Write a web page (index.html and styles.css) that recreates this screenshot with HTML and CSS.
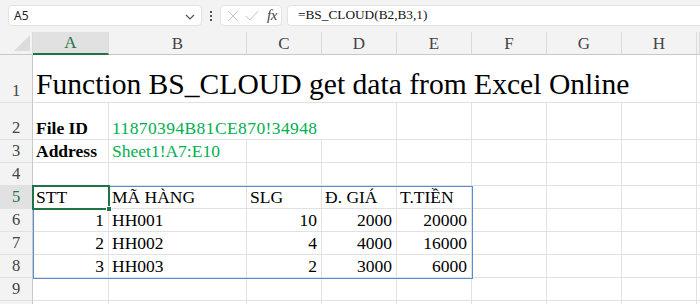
FILE: index.html
```html
<!DOCTYPE html>
<html lang="en">
  <head>
    <meta charset="utf-8" />
    <title>BS_CLOUD</title>
    <link rel="stylesheet" href="styles.css">
  </head>
  <body>
    <div class="toolbar">
      <div class="namebox">
        <span>A5</span>
        <svg class="chev" width="10" height="6" viewBox="0 0 10 6"><path d="M1 1l4 4 4-4" fill="none" stroke="#555" stroke-width="1.2"/></svg>
      </div>
      <div class="dots"><i></i><i></i><i></i></div>
      <div class="fxbox">
        <svg width="12" height="12" viewBox="0 0 12 12"><path d="M1 1l10 10M11 1L1 11" stroke="#c4c4c4" stroke-width="1"/></svg>
        <svg width="14" height="11" viewBox="0 0 14 11"><path d="M1 6l4 4 8-9" fill="none" stroke="#c4c4c4" stroke-width="1"/></svg>
        <span class="fx">fx</span>
      </div>
      <div class="formula">=BS_CLOUD(B2,B3,1)</div>
    </div>

    <div class="sheet">
      <div class="row head">
        <div class="corner"><span class="tri"></span></div>
        <div class="ch sel">A</div>
        <div class="ch">B</div>
        <div class="ch">C</div>
        <div class="ch">D</div>
        <div class="ch">E</div>
        <div class="ch">F</div>
        <div class="ch">G</div>
        <div class="ch">H</div>
        <div class="ch"></div>
      </div>

      <div class="row r1">
        <div class="rh">1</div>
        <div class="c title">Function BS_CLOUD get data from Excel Online</div>
        <div class="c"></div>
      </div>

      <div class="row r2">
        <div class="rh">2</div>
        <div class="c bold">File ID</div>
        <div class="c green span3">11870394B81CE870!34948</div>
        <div class="c"></div><div class="c"></div><div class="c"></div><div class="c"></div><div class="c"></div>
      </div>

      <div class="row">
        <div class="rh">3</div>
        <div class="c bold">Address</div>
        <div class="c green">Sheet1!A7:E10</div>
        <div class="c"></div><div class="c"></div><div class="c"></div><div class="c"></div><div class="c"></div><div class="c"></div><div class="c"></div>
      </div>

      <div class="row">
        <div class="rh">4</div>
        <div class="c"></div><div class="c"></div><div class="c"></div><div class="c"></div><div class="c"></div><div class="c"></div><div class="c"></div><div class="c"></div><div class="c"></div>
      </div>

      <div class="row">
        <div class="rh sel">5</div>
        <div class="c">STT</div>
        <div class="c">MÃ HÀNG</div>
        <div class="c">SLG</div>
        <div class="c">Đ. GIÁ</div>
        <div class="c">T.TIỀN</div>
        <div class="c"></div><div class="c"></div><div class="c"></div><div class="c"></div>
      </div>

      <div class="row">
        <div class="rh">6</div>
        <div class="c num">1</div>
        <div class="c">HH001</div>
        <div class="c num">10</div>
        <div class="c num">2000</div>
        <div class="c num">20000</div>
        <div class="c"></div><div class="c"></div><div class="c"></div><div class="c"></div>
      </div>

      <div class="row">
        <div class="rh">7</div>
        <div class="c num">2</div>
        <div class="c">HH002</div>
        <div class="c num">4</div>
        <div class="c num">4000</div>
        <div class="c num">16000</div>
        <div class="c"></div><div class="c"></div><div class="c"></div><div class="c"></div>
      </div>

      <div class="row">
        <div class="rh">8</div>
        <div class="c num">3</div>
        <div class="c">HH003</div>
        <div class="c num">2</div>
        <div class="c num">3000</div>
        <div class="c num">6000</div>
        <div class="c"></div><div class="c"></div><div class="c"></div><div class="c"></div>
      </div>

      <div class="row">
        <div class="rh">9</div>
        <div class="c"></div><div class="c"></div><div class="c"></div><div class="c"></div><div class="c"></div><div class="c"></div><div class="c"></div><div class="c"></div><div class="c"></div>
      </div>

      <div class="row">
        <div class="rh"></div>
        <div class="c"></div><div class="c"></div><div class="c"></div><div class="c"></div><div class="c"></div><div class="c"></div><div class="c"></div><div class="c"></div><div class="c"></div>
      </div>

      <!-- table range and active cell -->
      <div class="range"></div>
      <div class="cursor"><span class="handle"></span></div>
    </div>
  </body>
</html>
```

FILE: styles.css
```css
* {
  box-sizing: border-box;
}

body {
  margin: 0;
  width: 700px;
  height: 304px;
  overflow: hidden;
  background: #fff;
  font-family: "Liberation Serif", "Times New Roman", serif;
  color: #000;
}

/* formula bar */
.toolbar {
  height: 32px;
  background: #f3f3f3;
  display: flex;
  align-items: flex-start;
  padding: 5px 0 0 8px;
}

.namebox {
  width: 194px;
  height: 21px;
  background: #fff;
  border: 1px solid #e3e3e3;
  border-radius: 4px;
  display: flex;
  align-items: center;
  justify-content: space-between;
  padding: 0 6px 0 5px;
  font-family: "Noto Sans", sans-serif;
  font-size: 12px;
  color: #222;
}

.chev {
  margin-top: 2px;
}

.dots {
  width: 18px;
  height: 21px;
  display: flex;
  flex-direction: column;
  align-items: center;
  justify-content: center;
  gap: 2px;
}

.dots i {
  width: 2px;
  height: 2px;
  background: #555;
}

.fxbox {
  width: 62px;
  height: 21px;
  background: #fff;
  border: 1px solid #e3e3e3;
  border-radius: 4px;
  display: flex;
  align-items: center;
  padding: 0 0 0 6px;
  gap: 6px;
}

.fx {
  font-style: italic;
  font-size: 15px;
  color: #444;
  margin-left: 2px;
  letter-spacing: -0.5px;
}

.formula {
  flex: 1;
  height: 21px;
  margin-left: 5px;
  background: #fff;
  border: 1px solid #e3e3e3;
  border-right: 0;
  border-radius: 4px 0 0 4px;
  padding: 1px 0 0 10px;
  font-size: 13.3px;
  color: #111;
}

/* grid */
.sheet {
  position: relative;
}

.row {
  display: grid;
  grid-template-columns: 33px 76px 138px 75px 75px 75px 75px 75px 75px 1fr;
  height: 23px;
}

.row.head {
  height: 23px;
  background: #f3f3f3;
}

.row.r1 {
  height: 48px;
}

.row.r2 {
  height: 37px;
}

.corner {
  position: relative;
  border-bottom: 1px solid #c8c8c8;
  border-right: 1px solid #dadada;
}

.tri {
  position: absolute;
  right: 2px;
  bottom: 3px;
  width: 0;
  height: 0;
  border-left: 16px solid transparent;
  border-bottom: 16px solid #dcdcdc;
}

.ch {
  display: flex;
  align-items: center;
  justify-content: center;
  border-right: 1px solid #dadada;
  border-bottom: 1px solid #c8c8c8;
  font-size: 17px;
  color: #444;
  padding-top: 1px;
}

.ch.sel {
  background: #e1e1e1;
  color: #217346;
  border-bottom: 2px solid #217346;
}

.rh {
  display: flex;
  align-items: flex-end;
  justify-content: center;
  background: #f3f3f3;
  border-right: 1px solid #c8c8c8;
  border-bottom: 1px solid #e1e1e1;
  font-size: 16.5px;
  color: #444;
  padding-bottom: 2px;
  line-height: 18px;
}

.rh.sel {
  background: #e1e1e1;
  color: #217346;
}

.c {
  display: flex;
  align-items: flex-end;
  border-right: 1px solid #e1e1e1;
  border-bottom: 1px solid #e1e1e1;
  padding: 0 4px 1px 3px;
  font-size: 17.5px;
  line-height: 20px;
  white-space: nowrap;
  min-width: 0;
}

.c.num {
  justify-content: flex-end;
}

.c.bold {
  font-weight: bold;
}

.c.green {
  color: #00b050;
}

.c.span3 {
  grid-column: span 3;
  letter-spacing: 0.4px;
}

.c.title {
  grid-column: span 8;
  font-size: 29.6px;
  line-height: 33px;
  padding-bottom: 1px;
}

/* overlays */
.range {
  position: absolute;
  left: 33px;
  top: 154px;
  width: 440px;
  height: 93px;
  border: 1px solid #5b8bd6;
}

.cursor {
  position: absolute;
  left: 32px;
  top: 153px;
  width: 78px;
  height: 25px;
  border: 2px solid #217346;
}

.handle {
  position: absolute;
  right: -4px;
  bottom: -4px;
  width: 6px;
  height: 6px;
  background: #217346;
  border: 1px solid #fff;
}
```
